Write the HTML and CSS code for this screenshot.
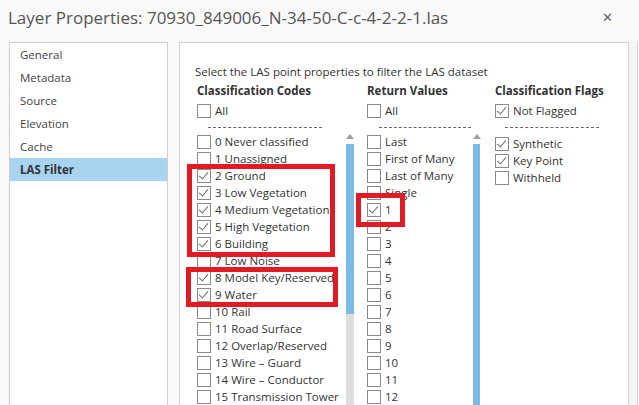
FILE: index.html
```html
<!DOCTYPE html>
<html>
<head>
    <title>Layer Properties</title>
    <link rel="stylesheet" href="styles.css">
</head>
<body>

<div id="titleBar">
    <span id="titleText">Layer Properties: 70930_849006_N-34-50-C-c-4-2-2-1.las</span>
    <span id="closeButton">&#x2715;</span>
</div>

<div id="dialog">

    <ul id="nav">
        <li>General</li>
        <li>Metadata</li>
        <li>Source</li>
        <li>Elevation</li>
        <li>Cache</li>
        <li class="active">LAS Filter</li>
    </ul>

    <div id="page">
        <p class="intro">Select the LAS point properties to filter the LAS dataset</p>

        <div class="columns">

            <div class="column codes">
                <div class="heading">Classification Codes</div>
                <div class="row"><span class="box"></span>All</div>
                <div class="dashes"></div>
                <div class="listArea">
                    <div class="list">
                        <div class="row"><span class="box"></span>0 Never classified</div>
                        <div class="row"><span class="box"></span>1 Unassigned</div>
                        <div class="row"><span class="box on"></span>2 Ground</div>
                        <div class="row"><span class="box on"></span>3 Low Vegetation</div>
                        <div class="row"><span class="box on"></span>4 Medium Vegetation</div>
                        <div class="row"><span class="box on"></span>5 High Vegetation</div>
                        <div class="row"><span class="box on"></span>6 Building</div>
                        <div class="row"><span class="box"></span>7 Low Noise</div>
                        <div class="row"><span class="box on"></span>8 Model Key/Reserved</div>
                        <div class="row"><span class="box on"></span>9 Water</div>
                        <div class="row"><span class="box"></span>10 Rail</div>
                        <div class="row"><span class="box"></span>11 Road Surface</div>
                        <div class="row"><span class="box"></span>12 Overlap/Reserved</div>
                        <div class="row"><span class="box"></span>13 Wire &ndash; Guard</div>
                        <div class="row"><span class="box"></span>14 Wire &ndash; Conductor</div>
                        <div class="row"><span class="box"></span>15 Transmission Tower</div>
                    </div>
                    <div class="scroll short">
                        <div class="arrow"></div>
                        <div class="thumb"></div>
                        <div class="track"></div>
                    </div>
                </div>
                <div class="mark markA"></div>
                <div class="mark markB"></div>
            </div>

            <div class="column returns">
                <div class="heading">Return Values</div>
                <div class="row"><span class="box"></span>All</div>
                <div class="dashes"></div>
                <div class="listArea">
                    <div class="list">
                        <div class="row"><span class="box"></span>Last</div>
                        <div class="row"><span class="box"></span>First of Many</div>
                        <div class="row"><span class="box"></span>Last of Many</div>
                        <div class="row"><span class="box"></span>Single</div>
                        <div class="row"><span class="box on"></span>1</div>
                        <div class="row"><span class="box"></span>2</div>
                        <div class="row"><span class="box"></span>3</div>
                        <div class="row"><span class="box"></span>4</div>
                        <div class="row"><span class="box"></span>5</div>
                        <div class="row"><span class="box"></span>6</div>
                        <div class="row"><span class="box"></span>7</div>
                        <div class="row"><span class="box"></span>8</div>
                        <div class="row"><span class="box"></span>9</div>
                        <div class="row"><span class="box"></span>10</div>
                        <div class="row"><span class="box"></span>11</div>
                        <div class="row"><span class="box"></span>12</div>
                    </div>
                    <div class="scroll">
                        <div class="arrow"></div>
                        <div class="thumb"></div>
                    </div>
                </div>
                <div class="mark markC"></div>
            </div>

            <div class="column flags">
                <div class="heading">Classification Flags</div>
                <div class="row"><span class="box on"></span>Not Flagged</div>
                <div class="dashes"></div>
                <div class="list">
                    <div class="row"><span class="box on"></span>Synthetic</div>
                    <div class="row"><span class="box on"></span>Key Point</div>
                    <div class="row"><span class="box"></span>Withheld</div>
                </div>
            </div>

        </div>
    </div>

    <div id="sideStrip"></div>
</div>

</body>
</html>
```

FILE: styles.css
```css
body {
    margin: 0;
    height: 405px;
    overflow: hidden;
    background: #f9f9f9;
    color: #333;
    font-family: "Open Sans", "Noto Sans", sans-serif;
}

#titleBar {
    height: 42px;
    display: flex;
    align-items: center;
    padding: 0 8px;
    box-sizing: border-box;
}

#titleText {
    flex-grow: 1;
    font-size: 17px;
    color: #555;
    margin-top: -8px;
}

#closeButton {
    font-size: 13px;
    color: #666;
    margin-right: 18px;
    margin-top: -8px;
}

#dialog {
    display: flex;
    height: 363px;
    padding-left: 9px;
}

/*---------Left nav-------------*/
#nav {
    list-style-type: none;
    margin: 0;
    padding: 0;
    width: 159px;
    border: 1px solid #cfcfcf;
    border-bottom: none;
    background: #fff;
    box-sizing: border-box;
}
#nav > li {
    height: 23px;
    line-height: 23px;
    padding-left: 10px;
    font-size: 11.5px;
    color: #444;
}
#nav > li.active {
    background: #a9d4f1;
    font-weight: bold;
    color: #333;
}

/*---------Main page-------------*/
#page {
    margin-left: 11px;
    width: 450px;
    border: 1px solid #cfcfcf;
    border-bottom: none;
    background: #fff;
    box-sizing: border-box;
    padding: 20px 0 0 15px;
    overflow: hidden;
}

#sideStrip {
    width: 8px;
    border-right: 1px solid #d6d6d6;
    background: #f4f4f4;
}

.intro {
    margin: 0;
    font-size: 11.5px;
    line-height: 17px;
}

.columns {
    display: flex;
    padding: 1px 0 0 2px;
}

.column { position: relative; }
.codes { width: 170px; }
.returns { width: 128px; }
.flags { flex-grow: 1; }

.heading {
    font-weight: bold;
    font-size: 11.5px;
    line-height: 20px;
    height: 21px;
}

.row {
    display: flex;
    align-items: center;
    height: 17px;
    font-size: 11.5px;
    white-space: nowrap;
}

.box {
    width: 12px;
    height: 12px;
    border: 1px solid #8a8a8a;
    background: #fff;
    margin-right: 4px;
    flex-shrink: 0;
    position: relative;
}
.box.on::after {
    content: "";
    position: absolute;
    left: 3px;
    top: 0px;
    width: 4px;
    height: 8px;
    border: solid #6d6d6d;
    border-width: 0 1.5px 1.5px 0;
    transform: rotate(40deg);
}

.dashes {
    margin: 8px 0 5px 11px;
    width: 114px;
    border-top: 1px dashed #666;
}
.returns .dashes { margin-left: 12px; width: 92px; }
.flags .dashes { margin-left: 10px; width: 94px; margin-bottom: 7px; }

.listArea {
    display: flex;
    height: 280px;
}
.listArea .list { flex-grow: 1; }

.scroll {
    width: 8px;
    display: flex;
    flex-direction: column;
    align-items: center;
}
.codes .scroll { margin-right: 13px; }
.returns .scroll { margin-right: 15px; width: 7px; }

.arrow {
    margin-top: 1px;
    width: 0;
    height: 0;
    border-left: 4px solid transparent;
    border-right: 4px solid transparent;
    border-bottom: 5px solid #a0a0a0;
}
.thumb {
    margin-top: 5px;
    width: 100%;
    flex-grow: 1;
    background: #7dbae5;
}
.short .thumb { flex-grow: 0; height: 170px; }
.track {
    width: 100%;
    flex-grow: 1;
    background: #dedede;
}

/*---------Red highlight marks-------------*/
.mark {
    position: absolute;
    border: 5px solid #e01b24;
    box-sizing: border-box;
}
.markA { left: -10px; top: 83px; width: 148px; height: 93px; }
.markB { left: -11px; top: 186px; width: 152px; height: 40px; }
.markC { left: -11px; top: 112px; width: 49px; height: 34px; }
```
